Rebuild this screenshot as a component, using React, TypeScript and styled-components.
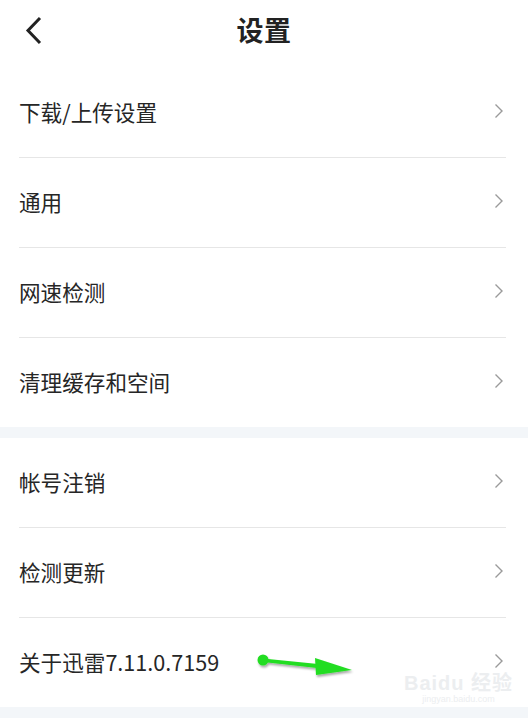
import * as React from 'react';
import styled, { createGlobalStyle } from 'styled-components';

const GlobalStyle = createGlobalStyle`
  html, body {
    margin: 0;
    padding: 0;
    background: #ffffff;
  }
  body {
    font-family: "Noto Sans CJK SC", "Noto Sans", Roboto, sans-serif;
  }
`;

const Page = styled.div`
  position: relative;
  width: 528px;
  height: 718px;
  overflow: hidden;
  background: #ffffff;
`;

const Header = styled.div`
  height: 68px;
  display: flex;
  align-items: center;
  justify-content: center;
  position: relative;
`;

const BackButton = styled.div`
  position: absolute;
  left: 24px;
  top: 15px;
  width: 24px;
  height: 32px;
  display: flex;
  align-items: center;
`;

const Title = styled.div`
  font-size: 27px;
  font-weight: 700;
  color: #222222;
  margin-top: -10px;
  letter-spacing: 0.5px;
`;

const Section = styled.div`
  display: flex;
  flex-direction: column;
`;

const Gap = styled.div<{ $h: number }>`
  height: ${(p) => p.$h}px;
  background: #f3f6f9;
`;

const Row = styled.div<{ $last?: boolean }>`
  height: 89px;
  margin: 0 22px 0 19px;
  display: flex;
  align-items: center;
  justify-content: space-between;
  border-bottom: ${(p) => (p.$last ? 'none' : '1px solid #e6e6e6')};
`;

const Label = styled.span`
  font-size: 21.6px;
  color: #262626;
  margin-top: -2px;
`;

const Chevron = styled.svg`
  width: 10px;
  height: 16px;
  margin-right: 2px;
  margin-top: -4px;
`;

const Annotation = styled.svg`
  position: absolute;
  left: 250px;
  top: 645px;
  width: 115px;
  height: 40px;
  overflow: visible;
`;

const Watermark = styled.div`
  position: absolute;
  left: 404px;
  top: 672px;
  display: flex;
  flex-direction: column;
  align-items: center;
  color: #eceef0;
  white-space: nowrap;
  font-family: "Liberation Sans", Arial, "Noto Sans CJK SC", sans-serif;
`;

const WatermarkMain = styled.span`
  font-size: 20px;
  font-weight: 700;
  letter-spacing: 1px;
  line-height: 22px;
`;

const WatermarkSub = styled.span`
  font-size: 9px;
  line-height: 11px;
`;

const Arrow = () => (
  <Chevron viewBox="0 0 10 16">
    <path d="M1.5 1.5 L8 8 L1.5 14.5" fill="none" stroke="#9a9a9a" strokeWidth="1.4" />
  </Chevron>
);

const group1 = ['下载/上传设置', '通用', '网速检测', '清理缓存和空间'];
const group2 = ['帐号注销', '检测更新', '关于迅雷7.11.0.7159'];

const App = () => (
  <>
    <GlobalStyle />
    <Page>
      <Header>
        <BackButton>
          <svg width="20" height="30" viewBox="0 0 20 30">
            <path d="M16 2 L4 14.5 L16 27" fill="none" stroke="#222" strokeWidth="3" />
          </svg>
        </BackButton>
        <Title>设置</Title>
      </Header>
      <Section>
        {group1.map((t, i) => (
          <Row key={t} $last={i === group1.length - 1}>
            <Label>{t}</Label>
            <Arrow />
          </Row>
        ))}
      </Section>
      <Gap $h={11} />
      <Section>
        {group2.map((t, i) => (
          <Row key={t} $last={i === group2.length - 1}>
            <Label>{t}</Label>
            <Arrow />
          </Row>
        ))}
      </Section>
      <Gap $h={11} />
      <Watermark>
        <WatermarkMain>Baidu 经验</WatermarkMain>
        <WatermarkSub>jingyan.baidu.com</WatermarkSub>
      </Watermark>
      <Annotation viewBox="0 0 115 40">
        <defs>
          <filter id="sh" x="-20%" y="-50%" width="140%" height="200%">
            <feDropShadow dx="1" dy="2" stdDeviation="1.2" floodColor="#000" floodOpacity="0.35" />
          </filter>
        </defs>
        <g filter="url(#sh)">
          <circle cx="13" cy="15" r="5.5" fill="#22dd22" />
          <path d="M13 13.5 L68 19 L67 23 L13 17 Z" fill="#22dd22" />
          <path d="M65 13 L102 25 L66 30 Z" fill="#22dd22" />
        </g>
      </Annotation>
    </Page>
  </>
);

export default App;
